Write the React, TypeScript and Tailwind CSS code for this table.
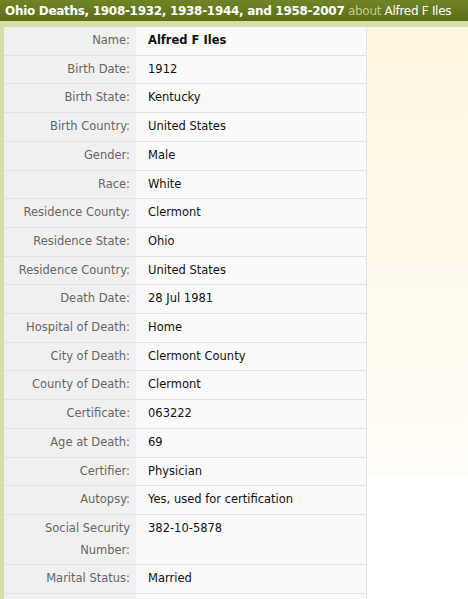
const rows: [string, string][] = [
  ["Name:", "Alfred F Iles"],
  ["Birth Date:", "1912"],
  ["Birth State:", "Kentucky"],
  ["Birth Country:", "United States"],
  ["Gender:", "Male"],
  ["Race:", "White"],
  ["Residence County:", "Clermont"],
  ["Residence State:", "Ohio"],
  ["Residence Country:", "United States"],
  ["Death Date:", "28 Jul 1981"],
  ["Hospital of Death:", "Home"],
  ["City of Death:", "Clermont County"],
  ["County of Death:", "Clermont"],
  ["Certificate:", "063222"],
  ["Age at Death:", "69"],
  ["Certifier:", "Physician"],
  ["Autopsy:", "Yes, used for certification"],
  ["Social Security Number:", "382-10-5878"],
  ["Marital Status:", "Married"],
  ["\u00a0", "\u00a0"],
];

export default function App() {
  return (
    <div className="w-[468px] h-[599px] overflow-hidden bg-white font-['DejaVu_Sans',sans-serif] text-[11.5px]">
      {/* Title bar */}
      <div className="h-[21px] bg-gradient-to-b from-[#6f8427] to-[#5b6d17] px-[5px] leading-[22px] whitespace-nowrap text-white text-[12px] tracking-[-0.3px]">
        <span className="font-bold">Ohio Deaths, 1908-1932, 1938-1944, and 1958-2007</span>{" "}
        <span className="text-[#c3c98a]">about</span> Alfred F Iles
      </div>
      <div className="h-[6px] bg-[#d6dea8]" />

      <div className="flex">
        <div className="w-[4px] shrink-0 bg-[#d6dea8]" />
        <div className="w-[363px] shrink-0 border-r border-[#e4e4e4]">
          {rows.map(([label, value], i) => (
            <div key={i} className="flex border-b border-[#e2e2e2]">
              <div className="w-[132px] shrink-0 bg-[#f0f0f0] py-[3px] pr-[6px] text-right leading-[21.7px] text-[#666]">
                {label === "Social Security Number:" ? (
                  <>
                    Social Security
                    <br />
                    Number:
                  </>
                ) : (
                  label
                )}
              </div>
              <div
                className={`flex-1 bg-[#fafafa] py-[3px] pl-[12px] leading-[21.7px] text-[#111] ${
                  i === 0 ? "font-bold" : ""
                }`}
              >
                {value}
              </div>
            </div>
          ))}
        </div>
        <div className="flex-1 h-[448px] bg-gradient-to-b from-[#fff7df] to-[#fffdf8]" />
      </div>
    </div>
  );
}
